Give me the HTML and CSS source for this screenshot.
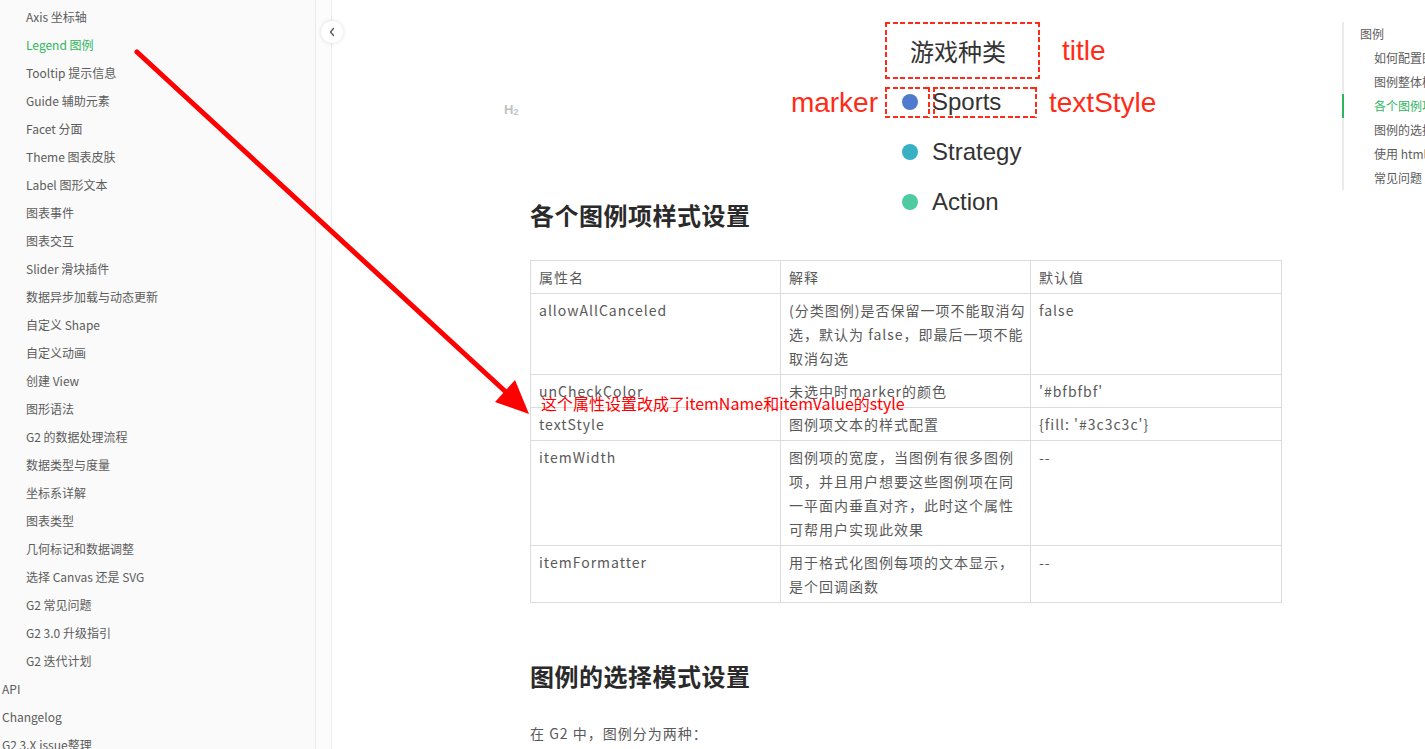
FILE: index.html
```html
<!DOCTYPE html>
<html lang="zh-CN">
<head>
<meta charset="utf-8">
<title>Legend 图例</title>
<link rel="stylesheet" href="styles.css">
</head>
<body>
<div class="page">
  <aside class="sidebar">
    <ul class="nav">
      <li class="sub">Axis 坐标轴</li>
      <li class="sub active">Legend 图例</li>
      <li class="sub">Tooltip 提示信息</li>
      <li class="sub">Guide 辅助元素</li>
      <li class="sub">Facet 分面</li>
      <li class="sub">Theme 图表皮肤</li>
      <li class="sub">Label 图形文本</li>
      <li class="sub">图表事件</li>
      <li class="sub">图表交互</li>
      <li class="sub">Slider 滑块插件</li>
      <li class="sub">数据异步加载与动态更新</li>
      <li class="sub">自定义 Shape</li>
      <li class="sub">自定义动画</li>
      <li class="sub">创建 View</li>
      <li class="sub">图形语法</li>
      <li class="sub">G2 的数据处理流程</li>
      <li class="sub">数据类型与度量</li>
      <li class="sub">坐标系详解</li>
      <li class="sub">图表类型</li>
      <li class="sub">几何标记和数据调整</li>
      <li class="sub">选择 Canvas 还是 SVG</li>
      <li class="sub">G2 常见问题</li>
      <li class="sub">G2 3.0 升级指引</li>
      <li class="sub">G2 迭代计划</li>
      <li class="top">API</li>
      <li class="top">Changelog</li>
      <li class="top">G2 3.X issue整理</li>
    </ul>
  </aside>
  <div class="gutter"></div>
  <main class="main">
    <div class="content">
      <div class="intro">
        <div class="intro-left">
          <span class="anchor">H<sub>2</sub></span>
          <h2 class="heading">各个图例项样式设置</h2>
        </div>
        <figure class="legend-fig">
          <div class="fig-row title-row">
            <div class="fig-label"></div>
            <div class="title-box dash">游戏种类</div>
            <div class="ann ann-title">title</div>
          </div>
          <div class="fig-row item first">
            <div class="fig-label ann">marker</div>
            <div class="marker-cell dash"><span class="dot dot-sports"></span></div>
            <div class="text-cell dash">Sports</div>
            <div class="ann ann-text">textStyle</div>
          </div>
          <div class="fig-row item">
            <div class="fig-label"></div>
            <div class="marker-cell"><span class="dot dot-strategy"></span></div>
            <div class="text-cell">Strategy</div>
          </div>
          <div class="fig-row item">
            <div class="fig-label"></div>
            <div class="marker-cell"><span class="dot dot-action"></span></div>
            <div class="text-cell">Action</div>
          </div>
        </figure>
      </div>

      <table class="props">
        <colgroup><col class="c1"><col class="c2"><col class="c3"></colgroup>
        <thead>
          <tr><td>属性名</td><td>解释</td><td>默认值</td></tr>
        </thead>
        <tbody>
          <tr><td>allowAllCanceled</td><td>(分类图例)是否保留一项不能取消勾<br>选，默认为 false，即最后一项不能<br>取消勾选</td><td>false</td></tr>
          <tr><td>unCheckColor</td><td>未选中时marker的颜色</td><td>'#bfbfbf'</td></tr>
          <tr><td>textStyle</td><td>图例项文本的样式配置</td><td>{fill: '#3c3c3c'}</td></tr>
          <tr><td>itemWidth</td><td>图例项的宽度，当图例有很多图例<br>项，并且用户想要这些图例项在同<br>一平面内垂直对齐，此时这个属性<br>可帮用户实现此效果</td><td>--</td></tr>
          <tr><td>itemFormatter</td><td>用于格式化图例每项的文本显示，<br>是个回调函数</td><td>--</td></tr>
        </tbody>
      </table>

      <h2 class="heading heading-2">图例的选择模式设置</h2>
      <p class="para">在 G2 中，图例分为两种：</p>
    </div>
  </main>
  <nav class="toc">
    <div class="toc-item">图例</div>
    <div class="toc-item toc-sub">如何配置图例</div>
    <div class="toc-item toc-sub">图例整体样式设置</div>
    <div class="toc-item toc-sub toc-active">各个图例项样式设置</div>
    <div class="toc-item toc-sub">图例的选择模式设置</div>
    <div class="toc-item toc-sub">使用 html 渲染图例</div>
    <div class="toc-item toc-sub">常见问题</div>
  </nav>
</div>

<button class="collapse" type="button" aria-label="收起">
  <svg width="8" height="10" viewBox="0 0 8 10"><path d="M5.5 1.5 L2.5 5 L5.5 8.5" fill="none" stroke="#555" stroke-width="1.3" stroke-linecap="round" stroke-linejoin="round"/></svg>
</button>

<div class="note">这个属性设置改成了itemName和itemValue的style</div>

<svg class="arrow" width="1425" height="749" viewBox="0 0 1425 749">
  <line x1="137" y1="52" x2="507" y2="393" stroke="#ff0000" stroke-width="5" stroke-linecap="round"/>
  <polygon points="529,414 495,402 515,380" fill="#ff0000"/>
</svg>
</body>
</html>
```

FILE: styles.css
```css
* { box-sizing: border-box; }

html, body {
  margin: 0;
  padding: 0;
  width: 1425px;
  height: 749px;
  overflow: hidden;
  background: #fff;
  font-family: "Noto Sans CJK SC", "Open Sans", sans-serif;
  color: #595959;
}

.page {
  display: flex;
  height: 749px;
  position: relative;
}

/* ---------- sidebar ---------- */
.sidebar {
  flex: 0 0 316px;
  background: #fafafa;
  border-right: 1px solid #e9e9e9;
  height: 749px;
  overflow: hidden;
}

.nav {
  list-style: none;
  margin: 0;
  padding: 3px 0 0;
}

.nav li {
  font-size: 12px;
  line-height: 28px;
  height: 28px;
  white-space: nowrap;
  color: #5c5c5c;
}

.nav .sub { padding-left: 26px; }
.nav .top { padding-left: 2px; }
.nav .active { color: #2fb55f; }

.gutter {
  flex: 0 0 16px;
  background: #fcfcfc;
  border-right: 1px solid #ececec;
  height: 749px;
}

/* ---------- main ---------- */
.main {
  flex: 0 0 1010px;
  height: 749px;
}

.content {
  margin-left: 198px;
  width: 751px;
}

.intro {
  display: flex;
  align-items: flex-start;
  padding-top: 22px;
}

.intro-left {
  flex: 0 0 260px;
  display: flex;
  flex-direction: column;
  align-items: flex-start;
}

.anchor {
  display: block;
  margin-left: -26px;
  margin-top: 80px;
  height: 15px;
  line-height: 15px;
  font-family: "Liberation Sans", Arial, sans-serif;
  font-size: 13px;
  font-weight: bold;
  color: #c2c2c2;
}

.anchor sub {
  font-size: 9px;
  vertical-align: -1px;
}

.heading {
  margin: 0;
  font-size: 24px;
  line-height: 36px;
  font-weight: 700;
  color: #2a2a2a;
  white-space: nowrap;
  letter-spacing: 0.5px;
}

.intro .heading { margin-top: 80px; }

/* ---------- legend figure ---------- */
.legend-fig {
  margin: 0;
  display: flex;
  flex-direction: column;
  font-family: "Liberation Sans", Arial, "Noto Sans CJK SC", sans-serif;
}

.fig-row {
  display: flex;
  align-items: center;
}

.fig-label {
  flex: 0 0 95px;
  text-align: right;
  padding-right: 7px;
}

.ann {
  font-family: "Liberation Sans", Arial, sans-serif;
  font-size: 28px;
  line-height: 31px;
  color: #ff2b16;
  white-space: nowrap;
}

.title-row { height: 57px; }

.title-box {
  width: 155px;
  height: 57px;
  line-height: 57px;
  padding-left: 25px;
  font-family: "Noto Sans CJK SC", sans-serif;
  font-size: 24px;
  color: #333;
}

.ann-title { margin-left: 22px; }

.item { height: 31px; margin-top: 19px; }
.item.first { margin-top: 8px; }

.marker-cell {
  flex: 0 0 45px;
  height: 31px;
  display: flex;
  align-items: center;
  padding-left: 17px;
}

.dot {
  width: 16px;
  height: 16px;
  border-radius: 50%;
  display: block;
  margin-top: -1px;
}

.dot-sports { background: #4e7bcd; }
.dot-strategy { background: #36b0c2; }
.dot-action { background: #4ecba0; }

.text-cell {
  flex: 0 0 104px;
  margin-left: 3px;
  height: 31px;
  line-height: 29px;
  font-size: 24px;
  color: #333;
  white-space: nowrap;
  text-indent: -1px;
}

.ann-text { margin-left: 12px; }

.dash {
  background:
    repeating-linear-gradient(90deg, #ff2b16 0 5px, transparent 5px 7.5px) left top / 100% 2px no-repeat,
    repeating-linear-gradient(90deg, #ff2b16 0 5px, transparent 5px 7.5px) left bottom / 100% 2px no-repeat,
    repeating-linear-gradient(180deg, #ff2b16 0 5px, transparent 5px 7.5px) left top / 2px 100% no-repeat,
    repeating-linear-gradient(180deg, #ff2b16 0 5px, transparent 5px 7.5px) right top / 2px 100% no-repeat;
}

/* ---------- table ---------- */
.props {
  margin-top: 27px;
  width: 751px;
  border-collapse: collapse;
  table-layout: fixed;
}

.props .c1 { width: 250px; }
.props .c2 { width: 250px; }
.props .c3 { width: 251px; }

.props td {
  border: 1px solid #dcdcdc;
  padding: 4px 8px;
  font-size: 14px;
  line-height: 24px;
  letter-spacing: 1px;
  vertical-align: top;
  white-space: nowrap;
  color: #595959;
}

.heading-2 { margin-top: 55px; }

.para {
  margin: 27px 0 0;
  font-size: 14px;
  line-height: 24px;
  letter-spacing: 1px;
  color: #595959;
}

/* ---------- toc ---------- */
.toc {
  flex: 0 0 130px;
  align-self: flex-start;
  margin-top: 22px;
  border-left: 2px solid #ebebeb;
}

.toc-item {
  font-size: 12px;
  line-height: 24px;
  height: 24px;
  padding-left: 16px;
  white-space: nowrap;
  color: #5c5c5c;
}

.toc-sub { padding-left: 30px; }

.toc-active {
  color: #2fb55f;
  border-left: 2px solid #2fb55f;
  margin-left: -2px;
}

/* ---------- overlays ---------- */
.collapse {
  position: absolute;
  left: 321px;
  top: 21px;
  width: 22px;
  height: 22px;
  padding: 0;
  border: none;
  border-radius: 50%;
  background: #fff;
  box-shadow: 0 0 4px rgba(0, 0, 0, 0.14);
  display: flex;
  align-items: center;
  justify-content: center;
}

.collapse svg { display: block; }

.note {
  position: absolute;
  left: 541px;
  top: 393px;
  font-family: "Noto Sans CJK SC", sans-serif;
  font-size: 16px;
  line-height: 20px;
  color: #ff0000;
  white-space: nowrap;
}

.arrow {
  position: absolute;
  left: 0;
  top: 0;
  pointer-events: none;
}
```
